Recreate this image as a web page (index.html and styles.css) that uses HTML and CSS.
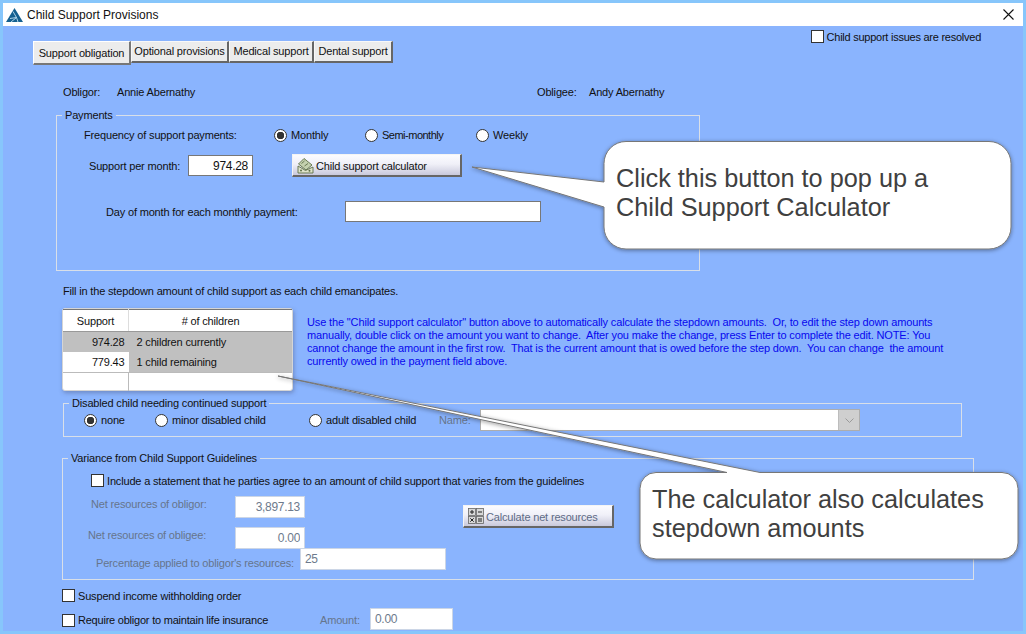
FILE: index.html
```html
<!DOCTYPE html>
<html lang="en">
<head>
    <meta charset="UTF-8">
    <title>Child Support Provisions</title>
    <link rel="stylesheet" href="styles.css">
</head>
<body>
<div class="window">
    <div class="titlebar">
        <svg class="app-icon" width="17" height="14" viewBox="0 0 17 14">
            <path d="M8.5 0 L17 14 H0 Z" fill="#15608f"/>
            <path d="M7 3.5 L10.5 9.5 L5 14 M4 10.5 L10.5 9.5 L12 14" stroke="#bfe0f2" stroke-width="0.9" fill="none"/>
        </svg>
        <span class="title-text">Child Support Provisions</span>
        <svg class="close-icon" width="11" height="11" viewBox="0 0 11 11">
            <path d="M0.5 0.5 L10.5 10.5 M10.5 0.5 L0.5 10.5" stroke="#111" stroke-width="1.1" fill="none"/>
        </svg>
    </div>

    <div class="form">
        <div class="top-bar">
            <div class="tabs">
                <div class="tab tab-active">Support obligation</div>
                <div class="tab tab-optional">Optional provisions</div>
                <div class="tab tab-medical">Medical support</div>
                <div class="tab tab-dental">Dental support</div>
            </div>
            <label class="check-item resolved">
                <input type="checkbox" class="check">
                <span>Child support issues are resolved</span>
            </label>
        </div>

        <div class="parties">
            <span class="party-label">Obligor:</span>
            <span class="party-name">Annie Abernathy</span>
            <span class="party-label2">Obligee:</span>
            <span>Andy Abernathy</span>
        </div>

        <fieldset class="group payments">
            <legend>Payments</legend>
            <div class="row freq-row">
                <span class="freq-label">Frequency of support payments:</span>
                <label class="opt opt-monthly"><input type="radio" class="radio" name="freq" checked><span>Monthly</span></label>
                <label class="opt opt-semi"><input type="radio" class="radio" name="freq"><span>Semi-monthly</span></label>
                <label class="opt"><input type="radio" class="radio" name="freq"><span>Weekly</span></label>
            </div>
            <div class="row support-row">
                <span class="support-label">Support per month:</span>
                <input class="field field-num support-input" value="974.28">
                <div class="btn calc-btn">
                    <svg width="17" height="17" viewBox="0 0 17 17">
                        <path d="M1.5 7 L7 1.5 L15 8 L9 13 Z" fill="#c3d0ae" stroke="#5d6f47" stroke-width="0.9"/>
                        <path d="M4.5 6.5 L7.5 4 M7.5 9 L11 6.5" stroke="#5d6f47" stroke-width="0.9"/>
                        <path d="M1 9 V16 H16 V10 L8.5 13.5 Z" fill="#dfe3cb" stroke="#5d6f47" stroke-width="0.9"/>
                        <circle cx="4" cy="13.5" r="1" fill="#5d6f47"/>
                        <circle cx="12.5" cy="13.8" r="1" fill="#5d6f47"/>
                    </svg>
                    <span>Child support calculator</span>
                </div>
            </div>
            <div class="row day-row">
                <span class="day-label">Day of month for each monthly payment:</span>
                <input class="field day-input">
            </div>
        </fieldset>

        <p class="fill-text">Fill in the stepdown amount of child support as each child emancipates.</p>

        <div class="stepdown">
            <div class="table-wrap">
                <table class="steps">
                    <thead>
                        <tr><th class="col-support">Support</th><th># of children</th></tr>
                    </thead>
                    <tbody>
                        <tr class="sel"><td class="num">974.28</td><td>2 children currently</td></tr>
                        <tr class="sel-part"><td class="num">779.43</td><td>1 child remaining</td></tr>
                        <tr class="empty"><td></td><td></td></tr>
                    </tbody>
                </table>
            </div>
            <p class="note">Use the "Child support calculator" button above to automatically calculate the stepdown amounts.&nbsp; Or, to edit the step down amounts<br>manually, double click on the amount you want to change.&nbsp; After you make the change, press Enter to complete the edit. NOTE: You<br>cannot change the amount in the first row.&nbsp; That is the current amount that is owed before the step down.&nbsp; You can change&nbsp; the amount<br>currently owed in the payment field above.</p>
        </div>

        <fieldset class="group disabled-group">
            <legend>Disabled child needing continued support</legend>
            <div class="row disabled-row">
                <label class="opt opt-none"><input type="radio" class="radio" name="dis" checked><span>none</span></label>
                <label class="opt opt-minor"><input type="radio" class="radio" name="dis"><span>minor disabled child</span></label>
                <label class="opt opt-adult"><input type="radio" class="radio" name="dis"><span>adult disabled child</span></label>
                <span class="name-label muted">Name:</span>
                <div class="select">
                    <span class="select-arrow">
                        <svg width="9" height="5" viewBox="0 0 9 5"><path d="M0.5 0.5 L4.5 4.5 L8.5 0.5" stroke="#9a9a9a" fill="none"/></svg>
                    </span>
                </div>
            </div>
        </fieldset>

        <fieldset class="group variance">
            <legend>Variance from Child Support Guidelines</legend>
            <label class="check-item include">
                <input type="checkbox" class="check">
                <span>Include a statement that he parties agree to an amount of child support that varies from the guidelines</span>
            </label>
            <div class="net-area">
                <div class="net-rows">
                    <div class="net-row">
                        <span class="muted net-label">Net resources of obligor:</span>
                        <input class="field field-off field-num net-input" value="3,897.13">
                    </div>
                    <div class="net-row net-row-2">
                        <span class="muted net-label net-label-2">Net resources of obligee:</span>
                        <input class="field field-off field-num net-input" value="0.00">
                    </div>
                </div>
                <div class="btn net-btn">
                    <svg width="16" height="16" viewBox="0 0 16 16">
                        <g fill="#d8d8d8" stroke="#666" stroke-width="0.8">
                            <rect x="0.5" y="0.5" width="7" height="7"/>
                            <rect x="8.5" y="0.5" width="7" height="7"/>
                            <rect x="0.5" y="8.5" width="7" height="7"/>
                            <rect x="8.5" y="8.5" width="7" height="7"/>
                        </g>
                        <path d="M2 4 H6 M4 2 V6 M10 4 H14 M2.3 10.3 L5.7 13.7 M5.7 10.3 L2.3 13.7 M10 11 H14 M10 13 H14" stroke="#222" fill="none"/>
                    </svg>
                    <span>Calculate net resources</span>
                </div>
            </div>
            <div class="percent-row">
                <span class="muted percent-label">Percentage applied to obligor's resources:</span>
                <input class="field field-off percent-input" value="25">
            </div>
        </fieldset>

        <label class="check-item suspend">
            <input type="checkbox" class="check">
            <span>Suspend income withholding order</span>
        </label>

        <div class="row insurance">
            <label class="check-item insurance-check">
                <input type="checkbox" class="check">
                <span>Require obligor to maintain life insurance</span>
            </label>
            <span class="muted amount-label">Amount:</span>
            <input class="field field-off amount-input" value="0.00">
        </div>
    </div>

    <!-- callouts drawn over the form -->
    <svg class="callout-shapes" width="1026" height="634" viewBox="0 0 1026 634">
        <defs>
            <filter id="shade" x="-10%" y="-10%" width="120%" height="120%">
                <feDropShadow dx="0" dy="1" stdDeviation="2" flood-color="#000" flood-opacity="0.4"/>
            </filter>
        </defs>
        <path filter="url(#shade)" fill="#fff" stroke="#777" stroke-width="1"
              d="M626 141.5 H989 a22 22 0 0 1 22 22 V227 a22 22 0 0 1 -22 22 H626 a22 22 0 0 1 -22 -22 V207 L472 167 L604 182 V163.5 a22 22 0 0 1 22 -22 Z"/>
        <path filter="url(#shade)" fill="#fff" stroke="#777" stroke-width="1"
              d="M656 472.5 H727 L278 376 L760 472.5 H1002 a16 16 0 0 1 16 16 V543 a16 16 0 0 1 -16 16 H656 a16 16 0 0 1 -16 -16 V488.5 a16 16 0 0 1 16 -16 Z"/>
    </svg>
    <div class="callout callout-one">Click this button to pop up a<br>Child Support Calculator</div>
    <div class="callout callout-two">The calculator also calculates<br>stepdown amounts</div>
</div>
</body>
</html>
```

FILE: styles.css
```css
body {
    margin: 0;
    font-family: "Liberation Sans", Arial, sans-serif;
    font-size: 11px;
    letter-spacing: -0.17px;
    color: #111;
}
.window {
    position: relative;
    width: 1026px;
    height: 634px;
    box-sizing: border-box;
    padding: 3px;
    background-color: #87c6fb;
    overflow: hidden;
}
.titlebar {
    display: flex;
    align-items: center;
    height: 23px;
    padding-left: 3px;
    padding-right: 9px;
    background-color: #fff;
}
.app-icon {
    margin-right: 4px;
}
.title-text {
    font-size: 12px;
    letter-spacing: 0;
    flex: 1;
}
.form {
    height: 605px;
    box-sizing: border-box;
    padding-top: 4px;
    background-color: #8ab4fe;
}
p {
    margin: 0;
}
.row {
    display: flex;
    align-items: center;
}

/* top */
.top-bar {
    display: flex;
    justify-content: space-between;
    align-items: flex-start;
    height: 35px;
}
.tabs {
    display: flex;
    align-items: flex-start;
    margin-top: 11px;
    margin-left: 30px;
}
.tab {
    box-sizing: border-box;
    height: 22px;
    padding-top: 3px;
    text-align: center;
    background-color: #ececec;
    border: 1px solid #f8f8f8;
    border-right: 2px solid #666;
    border-bottom: 2px solid #666;
}
.tab-active {
    width: 98px;
    height: 24px;
    padding-top: 5px;
    border-color: #fff #777 #777 #fff;
}
.tab-optional { width: 98px; }
.tab-medical { width: 85px; }
.tab-dental { width: 79px; }
.check-item {
    display: flex;
    align-items: center;
    gap: 3px;
}
.resolved {
    margin-right: 42px;
    letter-spacing: -0.25px;
}
.check {
    appearance: none;
    box-sizing: border-box;
    width: 13px;
    height: 13px;
    margin: 0;
    background-color: #fff;
    border: 1px solid #333;
}
.radio {
    appearance: none;
    box-sizing: border-box;
    width: 13px;
    height: 13px;
    margin: 0;
    background-color: #fff;
    border: 1px solid #333;
    border-radius: 50%;
}
.radio:checked {
    background-image: radial-gradient(circle, #333 0, #333 3.5px, #fff 4px);
}

.parties {
    display: flex;
    height: 14px;
    margin-top: 21px;
    padding-left: 60px;
}
.party-label { width: 54px; }
.party-name { width: 420px; }
.party-label2 { width: 52px; }

/* groups */
.group {
    box-sizing: border-box;
    margin: 0;
    padding: 0;
    border: 1px solid #d9dfe8;
}
.group legend {
    margin-left: 5px;
    padding: 0 3px;
    line-height: 13px;
}
.payments {
    width: 644px;
    height: 162px;
    margin-top: 9px;
    margin-left: 53px;
}
.freq-row {
    height: 14px;
    margin-top: 6px;
    padding-left: 27px;
}
.freq-label { width: 190px; }
.opt {
    display: flex;
    align-items: center;
    gap: 4px;
}
.opt-monthly { width: 91px; }
.opt-semi {
    width: 111px;
    letter-spacing: -0.5px;
}
.support-row {
    margin-top: 12px;
    padding-left: 32px;
}
.support-label { width: 99px; }
.field {
    box-sizing: border-box;
    height: 21px;
    margin: 0;
    padding: 0 4px;
    font-family: "Liberation Sans", Arial, sans-serif;
    font-size: 12px;
    letter-spacing: -0.3px;
    color: #111;
    background-color: #fff;
    border: 1px solid #777;
    border-radius: 0;
}
.field-num {
    text-align: right;
}
.field-off {
    color: #6d7a8c;
    border: 1px solid #ccd6e6;
    height: 22px;
}
.support-input { width: 65px; }
.btn {
    box-sizing: border-box;
    display: flex;
    align-items: center;
    gap: 2px;
    height: 23px;
    padding-left: 4px;
    background-image: linear-gradient(to bottom, #fbfbff, #f0f0f8 45%, #c9c9dc);
    border: 1px solid #f4f4f4;
    border-right: 2px solid #666;
    border-bottom: 2px solid #666;
}
.btn span {
    margin-top: 1px;
}
.calc-btn {
    width: 170px;
    margin-left: 39px;
}
.day-row {
    margin-top: 24px;
    padding-left: 49px;
}
.day-label { width: 239px; }
.day-input { width: 196px; }

/* stepdown table */
.fill-text {
    margin: 13px 0 0 60px;
    line-height: 14px;
}
.stepdown {
    display: flex;
    align-items: flex-start;
    margin-top: 10px;
    margin-left: 59px;
}
.table-wrap {
    box-sizing: border-box;
    width: 231px;
    height: 83px;
    background-color: #fff;
    border: 1px solid #d5d5d5;
    border-radius: 3px;
    box-shadow: 1px 2px 4px rgba(60, 60, 90, 0.35);
}
.steps {
    width: 229px;
    border-collapse: collapse;
    table-layout: fixed;
}
.steps th {
    height: 21px;
    padding: 0;
    font-weight: normal;
    border-top: 1px solid #777;
    border-bottom: 1px solid #999;
}
.steps .col-support {
    width: 65px;
    border-right: 1px solid #ddd;
}
.steps td {
    height: 20px;
    padding: 0 4px 0 8px;
}
.steps .num {
    text-align: right;
}
.sel td { background-color: #c0c0c0; }
.sel-part td { background-color: #c0c0c0; }
.sel-part .num { background-color: #fff; }
.empty td {
    height: 18px;
    border-top: 1px solid #bbb;
}
.empty td:first-child {
    border-right: 1px solid #bbb;
}
.note {
    margin: 8px 0 0 14px;
    color: #0808ee;
    line-height: 13px;
    letter-spacing: -0.14px;
    white-space: nowrap;
}

.disabled-group {
    width: 899px;
    height: 40px;
    margin: 6px 0 0 60px;
}
.disabled-row {
    margin-top: -1px;
    padding-left: 20px;
}
.opt-none { width: 71px; }
.opt-minor { width: 154px; }
.opt-adult { width: 130px; }
.muted {
    color: #66758c;
    white-space: nowrap;
}
.name-label { width: 41px; }
.select {
    box-sizing: border-box;
    display: flex;
    justify-content: flex-end;
    width: 380px;
    height: 22px;
    background-color: #fff;
    border: 1px solid #adadad;
}
.select-arrow {
    display: flex;
    align-items: center;
    justify-content: center;
    width: 20px;
    background-color: #cfcfcf;
    border-left: 1px solid #bdbdbd;
}

/* variance */
.variance {
    width: 912px;
    height: 128px;
    margin: 15px 0 0 59px;
}
.include {
    margin-top: 9px;
    margin-left: 28px;
}
.net-area {
    display: flex;
    margin-top: 9px;
    margin-left: 28px;
}
.net-rows { width: 214px; }
.net-row {
    display: flex;
    align-items: flex-start;
}
.net-row-2 { margin-top: 9px; }
.net-label {
    width: 144px;
    margin-top: 2px;
}
.net-label-2 { margin-left: -3px; width: 147px; }
.net-input { width: 70px; }
.net-btn {
    width: 151px;
    margin-left: 158px;
    margin-top: 9px;
    color: #5e6b86;
}
.percent-row {
    display: flex;
    align-items: flex-start;
    margin-top: -1px;
    margin-left: 33px;
}
.percent-label {
    width: 204px;
    margin-top: 9px;
}
.percent-input { width: 146px; }

.suspend {
    margin-top: 9px;
    margin-left: 59px;
}
.insurance {
    margin-top: 6px;
    margin-left: 59px;
}
.insurance-check {
    width: 258px;
    margin-top: 2px;
    letter-spacing: -0.22px;
}
.amount-label {
    width: 50px;
    margin-top: 2px;
}
.amount-input { width: 83px; }

/* callouts */
.callout-shapes {
    position: absolute;
    top: 0;
    left: 0;
}
.callout {
    position: absolute;
    font-size: 25.3px;
    letter-spacing: 0;
    line-height: 29px;
    color: #404040;
    white-space: nowrap;
}
.callout-one {
    top: 164px;
    left: 616px;
}
.callout-two {
    top: 485px;
    left: 652px;
}
```
